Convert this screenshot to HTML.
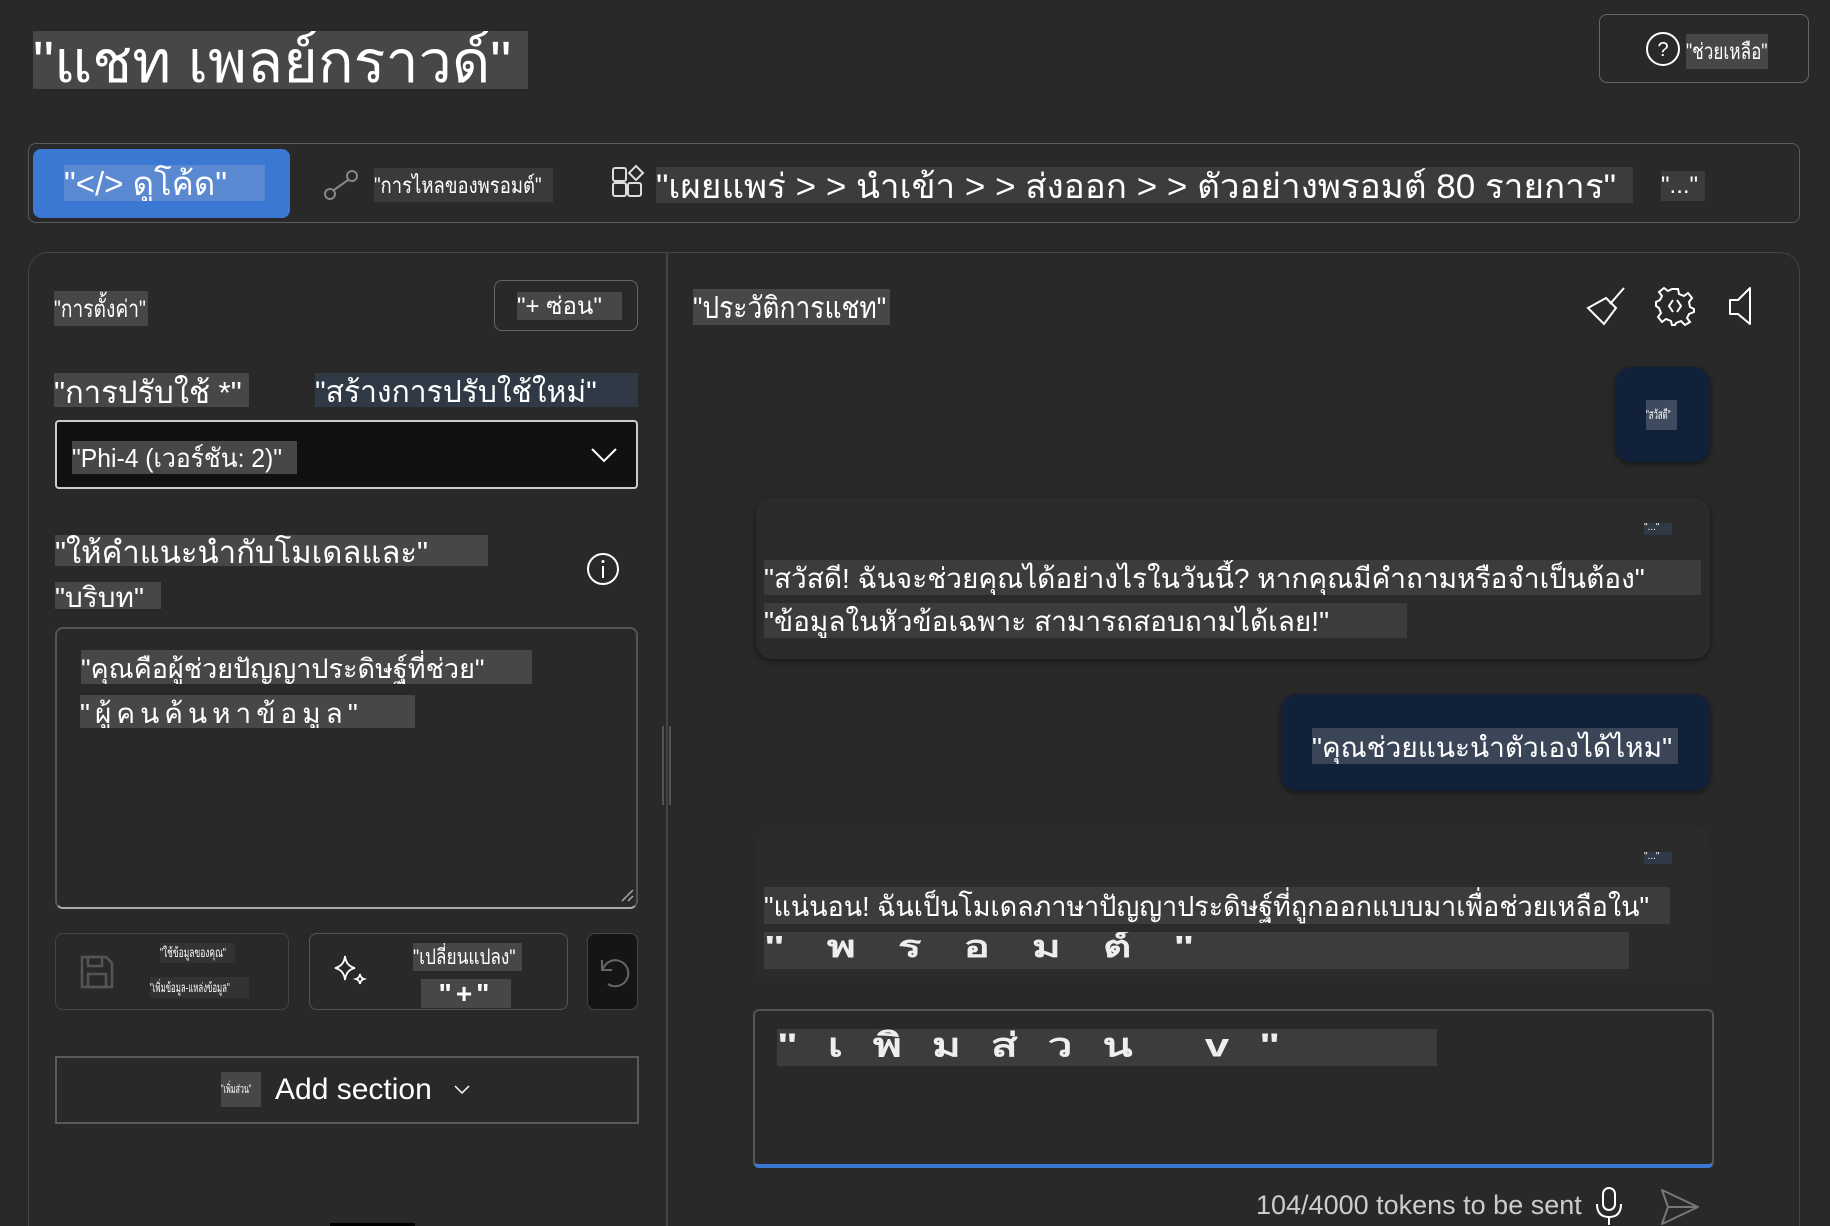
<!DOCTYPE html>
<html><head><meta charset="utf-8"><style>
*{box-sizing:border-box;margin:0;padding:0}
html,body{width:1830px;height:1226px;overflow:hidden}
body{background:#292929;color:#fff;font-family:"Liberation Sans","DejaVu Sans",sans-serif;position:relative}
.a{position:absolute}
.t{position:absolute;background:#474747;white-space:nowrap;overflow:hidden;color:#fff;line-height:1}
.s{display:inline-block;transform-origin:0 50%}
.b{position:absolute;border:1.5px solid #5c5c5c;border-radius:8px}
</style></head><body>
<div class="t" style="left:33px;top:31px;width:495px;height:58px;font-size:58px;line-height:64px"><span class="s" style="transform:scaleX(1.02)">"แชท เพลย์กราวด์"</span></div>

<div class="b" style="left:1599px;top:14px;width:210px;height:69px;border-color:#666"></div>
<svg class="a" style="left:1645px;top:31px" width="36" height="36" viewBox="0 0 36 36"><circle cx="18" cy="18" r="16" fill="none" stroke="#fff" stroke-width="2"/><text x="18" y="25" text-anchor="middle" font-size="20" fill="#fff" font-family="Liberation Sans">?</text></svg>
<div class="t" style="left:1686px;top:34px;width:82px;height:35px;font-size:22px;line-height:35px"><span class="s" style="transform:scaleX(0.78)">"ช่วยเหลือ"</span></div>

<div class="b" style="left:28px;top:143px;width:1772px;height:80px;border-color:#5a5a5a"></div>
<div class="a" style="left:33px;top:149px;width:257px;height:69px;background:#3a78d4;border-radius:8px"></div>
<div class="t" style="left:64px;top:165px;width:201px;height:36px;background:#5a89d2;font-size:33px;line-height:38px">"&lt;/&gt; ดูโค้ด"</div>
<svg class="a" style="left:322px;top:168px" width="38" height="34" viewBox="0 0 38 34"><circle cx="8" cy="26" r="5" fill="none" stroke="#888" stroke-width="2"/><circle cx="30" cy="8" r="5" fill="none" stroke="#888" stroke-width="2"/><path d="M12 22 L26 12" stroke="#888" stroke-width="2"/></svg>
<div class="t" style="left:374px;top:168px;width:179px;height:34px;background:#3a3a3a;font-size:22px;line-height:36px"><span class="s" style="transform:scaleX(0.84)">"การไหลของพรอมต์"</span></div>
<svg class="a" style="left:611px;top:164px" width="36" height="36" viewBox="0 0 36 36"><g fill="none" stroke="#ddd" stroke-width="2"><rect x="2" y="4" width="13" height="13" rx="2"/><rect x="2" y="19" width="13" height="13" rx="2"/><rect x="17" y="19" width="13" height="13" rx="2"/><path d="M25 2 L32 9 L25 16 L18 9 Z"/></g></svg>
<div class="t" style="left:656px;top:167px;width:977px;height:36px;background:#3c3c3c;font-size:34px;line-height:40px"><span class="s" style="transform:scaleX(1.03)">"เผยแพร่ &gt; &gt; นำเข้า &gt; &gt; ส่งออก &gt; &gt; ตัวอย่างพรอมต์ 80 รายการ"</span></div>
<div class="t" style="left:1661px;top:171px;width:44px;height:30px;background:#3c3c3c;font-size:24px;line-height:30px">"..."</div>

<div class="a" style="left:28px;top:252px;width:1772px;height:974px;border:1.5px solid #444;border-bottom:none;border-radius:20px 20px 0 0;background:#292929"></div>
<div class="a" style="left:666px;top:253px;width:1.5px;height:973px;background:#444"></div>
<div class="a" style="left:662px;top:726px;width:2px;height:79px;background:#555"></div>
<div class="a" style="left:669px;top:726px;width:2px;height:79px;background:#555"></div>

<div class="t" style="left:54px;top:291px;width:94px;height:35px;font-size:24px;line-height:38px"><span class="s" style="transform:scaleX(0.8)">"การตั้งค่า"</span></div>
<div class="b" style="left:494px;top:280px;width:144px;height:51px;border-color:#666"></div>
<div class="t" style="left:517px;top:292px;width:105px;height:28px;font-size:24px;line-height:30px">"+ ซ่อน"</div>

<div class="t" style="left:54px;top:373px;width:195px;height:34px;font-size:31px;line-height:40px">"การปรับใช้ *"</div>
<div class="t" style="left:315px;top:373px;width:323px;height:34px;background:#2f3a46;font-size:30px;line-height:40px">"สร้างการปรับใช้ใหม่"</div>
<div class="a" style="left:55px;top:420px;width:583px;height:69px;background:#111;border:2px solid #ccc;border-radius:4px"></div>
<div class="t" style="left:72px;top:441px;width:225px;height:33px;font-size:26px;line-height:35px"><span class="s" style="transform:scaleX(0.95)">"Phi-4 (เวอร์ชัน: 2)"</span></div>
<svg class="a" style="left:590px;top:446px" width="28" height="18" viewBox="0 0 28 18"><path d="M2 3 L14 15 L26 3" fill="none" stroke="#fff" stroke-width="2"/></svg>

<div class="t" style="left:55px;top:535px;width:433px;height:31px;font-size:31px;line-height:36px">"ให้คำแนะนำกับโมเดลและ"</div>
<div class="t" style="left:55px;top:582px;width:106px;height:27px;font-size:28px;line-height:32px">"บริบท"</div>
<svg class="a" style="left:586px;top:552px" width="34" height="34" viewBox="0 0 34 34"><circle cx="17" cy="17" r="15" fill="none" stroke="#fff" stroke-width="2"/><path d="M17 14 V26" stroke="#fff" stroke-width="2"/><circle cx="17" cy="9.5" r="1.5" fill="#fff"/></svg>

<div class="a" style="left:55px;top:627px;width:583px;height:282px;border:2px solid #555;border-bottom-color:#aaa;border-radius:8px"></div>
<svg class="a" style="left:620px;top:888px" width="14" height="14"><path d="M2 13 L13 2 M8 13 L13 8" stroke="#aaa" stroke-width="1.5"/></svg>
<div class="t" style="left:81px;top:650px;width:451px;height:34px;font-size:27px;line-height:38px">"คุณคือผู้ช่วยปัญญาประดิษฐ์ที่ช่วย"</div>
<div class="t" style="left:80px;top:695px;width:335px;height:33px;font-size:28px;line-height:38px;letter-spacing:5px">"ผู้คนค้นหาข้อมูล"</div>

<div class="b" style="left:55px;top:933px;width:234px;height:77px;border-color:#444"></div>
<svg class="a" style="left:79px;top:954px" width="36" height="36" viewBox="0 0 36 36"><g fill="none" stroke="#555" stroke-width="2.5"><path d="M3 3 H27 L33 9 V33 H3 Z"/><rect x="9" y="3" width="14" height="9"/><rect x="9" y="20" width="18" height="13"/></g></svg>
<div class="t" style="left:160px;top:943px;width:75px;height:20px;background:#333;font-size:13px;line-height:20px"><span class="s" style="transform:scaleX(0.65)">"ใช้ข้อมูลของคุณ"</span></div>
<div class="t" style="left:150px;top:977px;width:99px;height:21px;background:#333;font-size:13px;line-height:21px"><span class="s" style="transform:scaleX(0.6)">"เพิ่มข้อมูล-แหล่งข้อมูล"</span></div>
<div class="b" style="left:309px;top:933px;width:259px;height:77px;border-color:#555"></div>
<svg class="a" style="left:333px;top:954px" width="36" height="34" viewBox="0 0 36 34"><g fill="none" stroke="#fff" stroke-width="1.8"><path d="M12 2 Q13 12 22 14 Q13 16 12 26 Q11 16 2 14 Q11 12 12 2 Z"/><path d="M27 20 Q27.5 24 31 25 Q27.5 26 27 30 Q26.5 26 23 25 Q26.5 24 27 20 Z"/></g></svg>
<div class="t" style="left:413px;top:943px;width:109px;height:28px;font-size:21px;line-height:30px"><span class="s" style="transform:scaleX(0.82)">"เปลี่ยนแปลง"</span></div>
<div class="t" style="left:421px;top:979px;width:90px;height:29px;font-size:28px;line-height:30px;text-align:center;letter-spacing:4px;font-weight:bold">"+"</div>
<div class="a" style="left:587px;top:933px;width:51px;height:77px;background:#151515;border:1.5px solid #444;border-radius:8px"></div>
<svg class="a" style="left:594px;top:952px" width="36" height="40" viewBox="0 0 36 40"><path d="M8 8 V18 H18" fill="none" stroke="#666" stroke-width="2"/><path d="M9 17 A13 13 0 1 1 14 32" fill="none" stroke="#666" stroke-width="2"/></svg>

<div class="a" style="left:55px;top:1056px;width:584px;height:68px;border:2px solid #5a5a5a"></div>
<div class="t" style="left:221px;top:1072px;width:40px;height:35px;font-size:12px;line-height:35px"><span class="s" style="transform:scaleX(0.6)">"เพิ่มส่วน"</span></div>
<div class="a" style="left:275px;top:1071px;font-size:30px;line-height:38px;color:#fff">Add section</div>
<svg class="a" style="left:454px;top:1085px" width="16" height="10"><path d="M1 1 L8 8 L15 1" fill="none" stroke="#fff" stroke-width="1.5"/></svg>
<div class="a" style="left:330px;top:1223px;width:85px;height:3px;background:#000"></div>

<div class="t" style="left:693px;top:289px;width:197px;height:36px;font-size:30px;line-height:40px"><span class="s" style="transform:scaleX(0.88)">"ประวัติการแชท"</span></div>
<svg class="a" style="left:1584px;top:286px" width="42" height="40" viewBox="0 0 42 40"><g fill="none" stroke="#fff" stroke-width="2"><path d="M40 2 L26 18"/><path d="M22 12 L32 22 L20 38 L4 22 Z"/></g></svg>
<svg class="a" style="left:1655px;top:286px" width="40" height="40" viewBox="0 0 40 40"><g fill="none" stroke="#fff" stroke-width="2"><path d="M17 3 H23 L24 8 L29 10 L33 7 L37 12 L34 16 L35 21 L39 23 V26 L34 28 L32 32 L35 36 L30 39 L26 35 L21 37 L20 39 H17 L16 35 L11 33 L7 36 L3 31 L6 27 L4 22 L1 20 V16 L5 14 L7 10 L4 6 L9 2 L13 5 Z"/><path d="M18 14 L14 20 L18 26 M22 14 L26 20 L22 26"/></g></svg>
<svg class="a" style="left:1728px;top:286px" width="24" height="40" viewBox="0 0 24 40"><path d="M22 2 V38 L10 28 H2 V14 H10 Z" fill="none" stroke="#fff" stroke-width="2" stroke-linejoin="round"/></svg>

<div class="a" style="left:1615px;top:367px;width:95px;height:95px;background:#12213a;border-radius:16px;box-shadow:0 2px 6px rgba(0,0,0,.5)"></div>
<div class="t" style="left:1646px;top:400px;width:31px;height:30px;background:#3e4b5e;font-size:13px;line-height:30px"><span class="s" style="transform:scaleX(0.6)">"สวัสดี"</span></div>

<div class="a" style="left:756px;top:498px;width:954px;height:161px;background:#2b2b2b;border-radius:16px;box-shadow:0 2px 6px rgba(0,0,0,.5)"></div>
<div class="t" style="left:1644px;top:523px;width:28px;height:12px;background:#2f3a46;font-size:10px;line-height:10px">"..."</div>
<div class="t" style="left:764px;top:560px;width:937px;height:35px;background:#3c3c3c;font-size:28px;line-height:38px"><span class="s" style="transform:scaleX(1.0)">"สวัสดี! ฉันจะช่วยคุณได้อย่างไรในวันนี้? หากคุณมีคำถามหรือจำเป็นต้อง"</span></div>
<div class="t" style="left:764px;top:603px;width:643px;height:35px;background:#3c3c3c;font-size:28px;line-height:38px">"ข้อมูลในหัวข้อเฉพาะ สามารถสอบถามได้เลย!"</div>

<div class="a" style="left:1281px;top:694px;width:429px;height:97px;background:#12213a;border-radius:16px;box-shadow:0 2px 6px rgba(0,0,0,.5)"></div>
<div class="t" style="left:1312px;top:728px;width:366px;height:36px;background:#3a4658;font-size:28px;line-height:40px">"คุณช่วยแนะนำตัวเองได้ไหม"</div>

<div class="a" style="left:756px;top:826px;width:954px;height:151px;background:#2b2b2b;border-radius:16px 16px 0 0;overflow:hidden">
<div class="t" style="left:888px;top:26px;width:28px;height:12px;background:#2f3a46;font-size:10px;line-height:10px">"..."</div>
</div>
<div class="t" style="left:764px;top:887px;width:906px;height:37px;background:#3c3c3c;font-size:28px;line-height:40px"><span class="s" style="transform:scaleX(0.96)">"แน่นอน! ฉันเป็นโมเดลภาษาปัญญาประดิษฐ์ที่ถูกออกแบบมาเพื่อช่วยเหลือใน"</span></div>
<div class="t" style="left:764px;top:932px;width:865px;height:37px;background:#3c3c3c;font-size:44px;line-height:30px;letter-spacing:42px;font-weight:bold;color:#eee"><span class="s" style="transform:scaleY(0.7)">"พรอมต์"</span></div>

<div class="a" style="left:753px;top:1009px;width:961px;height:159px;border:2px solid #555;border-bottom:4px solid #3a78d4;border-radius:6px;background:#292929"></div>
<div class="t" style="left:777px;top:1029px;width:660px;height:37px;background:#3c3c3c;font-size:44px;line-height:34px;letter-spacing:30px;font-weight:bold;color:#eee"><span class="s" style="transform:scaleY(0.75)">"เพิ่มส่วน v"</span></div>

<div class="a" style="left:1256px;top:1188px;font-size:27px;line-height:34px;color:#ccc">104/4000 tokens to be sent</div>
<svg class="a" style="left:1594px;top:1186px" width="30" height="40" viewBox="0 0 30 40"><g fill="none" stroke="#fff" stroke-width="2"><rect x="9" y="2" width="12" height="22" rx="6"/><path d="M3 18 Q3 31 15 31 Q27 31 27 18 M15 31 V39"/></g></svg>
<svg class="a" style="left:1660px;top:1188px" width="40" height="38" viewBox="0 0 40 38"><path d="M2 2 L38 19 L2 36 L8 19 Z M8 19 H38" fill="none" stroke="#777" stroke-width="2" stroke-linejoin="round"/></svg>
</body></html>
